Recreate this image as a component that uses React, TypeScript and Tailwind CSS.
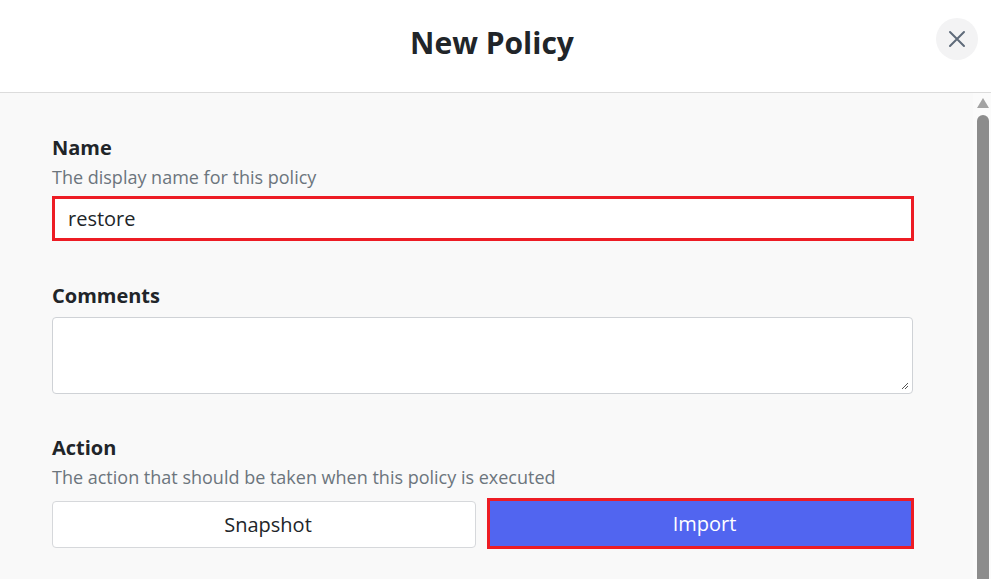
import React from "react"

const font = { fontFamily: '"Open Sans", "Noto Sans", sans-serif' }

function Label(props: { text: string }) {
  return <div className="text-[20px] leading-[28px] font-bold text-[#212529]">{props.text}</div>
}

function Help(props: { text: string }) {
  return <div className="text-[18px] leading-[24px] text-[#6c757d] mt-[3px]">{props.text}</div>
}

export default function App() {
  return (
    <div className="w-[991px] h-[579px] flex flex-col bg-white overflow-hidden" style={font}>
      <div className="h-[93px] shrink-0 flex items-center justify-between border-b border-[#dcdcdc] pl-[6px] pr-[13px]">
        <div className="w-[42px]" />
        <h1 className="text-[30px] font-bold text-[#212529] -mt-[8px]">New Policy</h1>
        <button className="w-[42px] h-[42px] rounded-full bg-[#f3f3f4] flex items-center justify-center -mt-[15px]">
          <svg width="18" height="18" viewBox="0 0 18 18" fill="none" stroke="#5f6b7a" strokeWidth="2" strokeLinecap="round">
            <path d="M2 2 L16 16 M16 2 L2 16" />
          </svg>
        </button>
      </div>
      <div className="flex-1 flex bg-[#f9f9f9] min-h-0">
        <div className="flex-1 min-w-0 flex flex-col pl-[52px] pr-[60px] pt-[41px]">
          <Label text="Name" />
          <Help text="The display name for this policy" />
          <div className="mt-[7px] mr-[-1px] h-[45px] border-[3px] border-[#ed1c24] bg-white flex items-center pl-[13px] text-[20px] text-[#212529]">
            restore
          </div>

          <div className="mt-[41px]">
            <Label text="Comments" />
          </div>
          <div className="relative mt-[7px] h-[77px] border border-[#cfd2d6] rounded-[4px] bg-white">
            <svg className="absolute right-[3px] bottom-[3px]" width="8" height="8" viewBox="0 0 8 8" stroke="#555" strokeWidth="1">
              <path d="M7 1 L1 7 M7 4 L4 7" />
            </svg>
          </div>

          <div className="mt-[40px]">
            <Label text="Action" />
          </div>
          <Help text="The action that should be taken when this policy is executed" />
          <div className="flex items-start mt-[9px]">
            <button className="w-[424px] h-[47px] mt-[3px] pl-[8px] border border-[#d6d8db] rounded-[4px] bg-white text-[20px] text-[#212529]">
              Snapshot
            </button>
            <button className="ml-[11px] w-[427px] -mr-[1px] h-[51px] pl-[8px] border-[3px] border-[#ed1c24] bg-[#5165f0] text-[20px] text-white">
              Import
            </button>
          </div>
        </div>
        <div className="w-[18px] shrink-0 bg-[#fbfbfb] flex flex-col items-center pt-[5px]">
          <div className="w-0 h-0 border-l-[6px] border-r-[6px] border-b-[10px] border-l-transparent border-r-transparent border-b-[#a3a3a3] ml-[2px]" />
          <div className="w-[12px] flex-1 mt-[7px] ml-[2px] rounded-t-full bg-[#8c8c8c]" />
        </div>
      </div>
    </div>
  )
}
